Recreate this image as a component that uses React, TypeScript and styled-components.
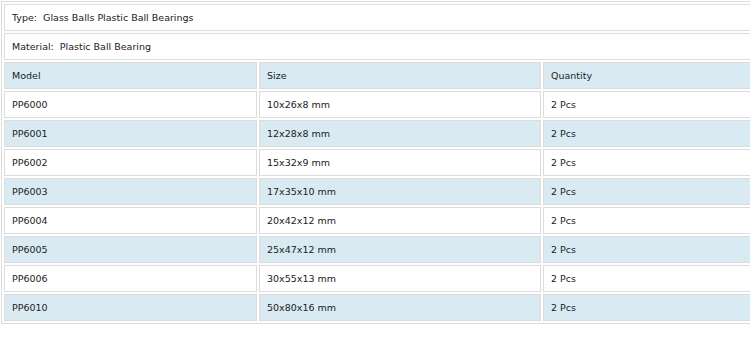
import React from "react";
import styled, { createGlobalStyle } from "styled-components";

const GlobalStyle = createGlobalStyle`
  body {
    margin: 0;
    background: #ffffff;
    font-family: "DejaVu Sans", Verdana, sans-serif;
  }
`;

const bearings = [
  { model: "PP6000", size: "10x26x8 mm", qty: "2 Pcs" },
  { model: "PP6001", size: "12x28x8 mm", qty: "2 Pcs" },
  { model: "PP6002", size: "15x32x9 mm", qty: "2 Pcs" },
  { model: "PP6003", size: "17x35x10 mm", qty: "2 Pcs" },
  { model: "PP6004", size: "20x42x12 mm", qty: "2 Pcs" },
  { model: "PP6005", size: "25x47x12 mm", qty: "2 Pcs" },
  { model: "PP6006", size: "30x55x13 mm", qty: "2 Pcs" },
  { model: "PP6010", size: "50x80x16 mm", qty: "2 Pcs" },
];

const App = () => {
  return (
    <Page>
      <GlobalStyle />
      <SpecTable>
        <colgroup>
          <col style={{ width: 253 }} />
          <col style={{ width: 282 }} />
          <col />
        </colgroup>
        <tbody>
          <Row>
            <Cell colSpan={3}>Type:&nbsp; Glass Balls Plastic Ball Bearings</Cell>
          </Row>
          <Row>
            <Cell colSpan={3}>Material:&nbsp; Plastic Ball Bearing</Cell>
          </Row>
          <Row $shaded>
            <Cell>Model</Cell>
            <Cell>Size</Cell>
            <Cell>Quantity</Cell>
          </Row>
          {bearings.map((b, i) => (
            <Row key={b.model} $shaded={i % 2 === 1}>
              <Cell>{b.model}</Cell>
              <Cell>{b.size}</Cell>
              <Cell>{b.qty}</Cell>
            </Row>
          ))}
        </tbody>
      </SpecTable>
    </Page>
  );
};

const Page = styled.div`
  padding: 1px 0 0 1px;
  width: 800px;
`;

const SpecTable = styled.table`
  width: 790px;
  table-layout: fixed;
  border: 1px solid #dcdcdc;
  border-collapse: separate;
  border-spacing: 2px;
`;

const Row = styled.tr<{ $shaded?: boolean }>`
  background: ${(p) => (p.$shaded ? "#d9eaf3" : "#ffffff")};
`;

const Cell = styled.td`
  height: 25px;
  padding: 0 7px;
  border: 1px solid #dcdcdc;
  font-size: 9.5px;
  color: #222;
  white-space: nowrap;
  vertical-align: middle;
  box-sizing: content-box;
`;

export default App;
